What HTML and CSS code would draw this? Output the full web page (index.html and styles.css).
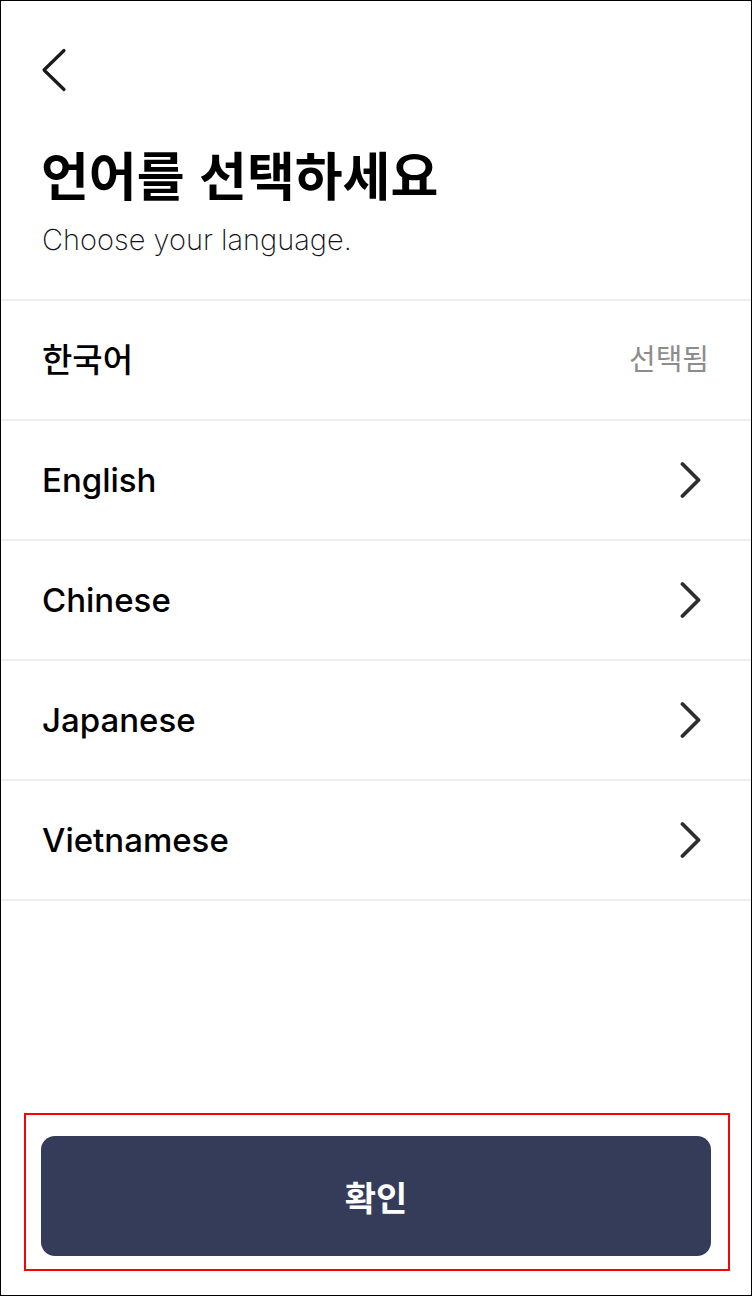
FILE: index.html
```html
<!DOCTYPE html>
<html lang="ko">
<head>
<meta charset="utf-8">
<title>언어 선택</title>
<link rel="stylesheet" href="styles.css">
</head>
<body>
<div class="frame">
  <header class="top">
    <button class="back" aria-label="뒤로">
      <svg width="26" height="48" viewBox="0 0 26 48"><path d="M23 4.5 L3 24 L23 43.5" fill="none" stroke="#1a1a1a" stroke-width="3.2" stroke-linecap="round" stroke-linejoin="round"/></svg>
    </button>
    <h1 class="title">언어를 선택하세요</h1>
    <p class="subtitle">Choose your language.</p>
  </header>
  <ul class="list">
    <li class="row"><span class="label">한국어</span><span class="selected">선택됨</span></li>
    <li class="row"><span class="label">English</span><svg class="chev" width="30" height="40" viewBox="0 0 30 40"><path d="M2.5 4 L18.5 20 L2.5 36" fill="none" stroke="#2e2e2e" stroke-width="3.8" stroke-linecap="round" stroke-linejoin="round"/></svg></li>
    <li class="row"><span class="label">Chinese</span><svg class="chev" width="30" height="40" viewBox="0 0 30 40"><path d="M2.5 4 L18.5 20 L2.5 36" fill="none" stroke="#2e2e2e" stroke-width="3.8" stroke-linecap="round" stroke-linejoin="round"/></svg></li>
    <li class="row"><span class="label">Japanese</span><svg class="chev" width="30" height="40" viewBox="0 0 30 40"><path d="M2.5 4 L18.5 20 L2.5 36" fill="none" stroke="#2e2e2e" stroke-width="3.8" stroke-linecap="round" stroke-linejoin="round"/></svg></li>
    <li class="row"><span class="label">Vietnamese</span><svg class="chev" width="30" height="40" viewBox="0 0 30 40"><path d="M2.5 4 L18.5 20 L2.5 36" fill="none" stroke="#2e2e2e" stroke-width="3.8" stroke-linecap="round" stroke-linejoin="round"/></svg></li>
  </ul>
  <div class="spacer"></div>
  <div class="cta">
    <button class="confirm">확인</button>
  </div>
</div>
</body>
</html>
```
FILE: styles.css
```css
* { box-sizing: border-box; }
html, body { margin: 0; padding: 0; background: #fff; }
body { font-family: "Inter", "Noto Sans CJK KR", sans-serif; color: #000; }
.frame {
  width: 752px;
  height: 1296px;
  border: 1px solid #000;
  display: flex;
  flex-direction: column;
  overflow: hidden;
}
.top { padding: 45px 0 41px 40px; display: flex; flex-direction: column; align-items: flex-start; }
.back { border: 0; background: none; padding: 0; margin: 0; display: block; height: 48px; cursor: pointer; }
.back svg { display: block; }
.title {
  margin: 49px 0 0 0;
  font-family: "Noto Sans CJK KR", sans-serif;
  font-size: 52px;
  line-height: 62px;
  font-weight: 700;
  letter-spacing: 0;
}
.subtitle {
  margin: 17px 0 0 1px;
  font-size: 29px;
  line-height: 36px;
  font-weight: 200;
  color: #111;
}
.list { list-style: none; margin: 0; padding: 0; border-top: 2px solid #eeeeee; }
.row {
  height: 120px;
  border-bottom: 2px solid #eeeeee;
  display: flex;
  align-items: center;
  justify-content: space-between;
  padding: 0 41px 0 41px;
}
.label { font-size: 33px; font-weight: 500; line-height: 40px; }
.selected { font-size: 29px; color: #8c8c8c; line-height: 40px; margin-right: 1px; }
.chev { display: block; margin-right: 0; }
.spacer { flex: 1; }
.cta {
  margin: 0 21px 24px 23px;
  border: 2px solid #ff0000;
  padding: 21px 17px 13px 15px;
}
.confirm {
  display: block;
  width: 100%;
  height: 120px;
  border: 0;
  border-radius: 14px;
  background: #343c59;
  color: #fff;
  font-family: "Noto Sans CJK KR", sans-serif;
  font-size: 34px;
  font-weight: 700;
  cursor: pointer;
}
```
